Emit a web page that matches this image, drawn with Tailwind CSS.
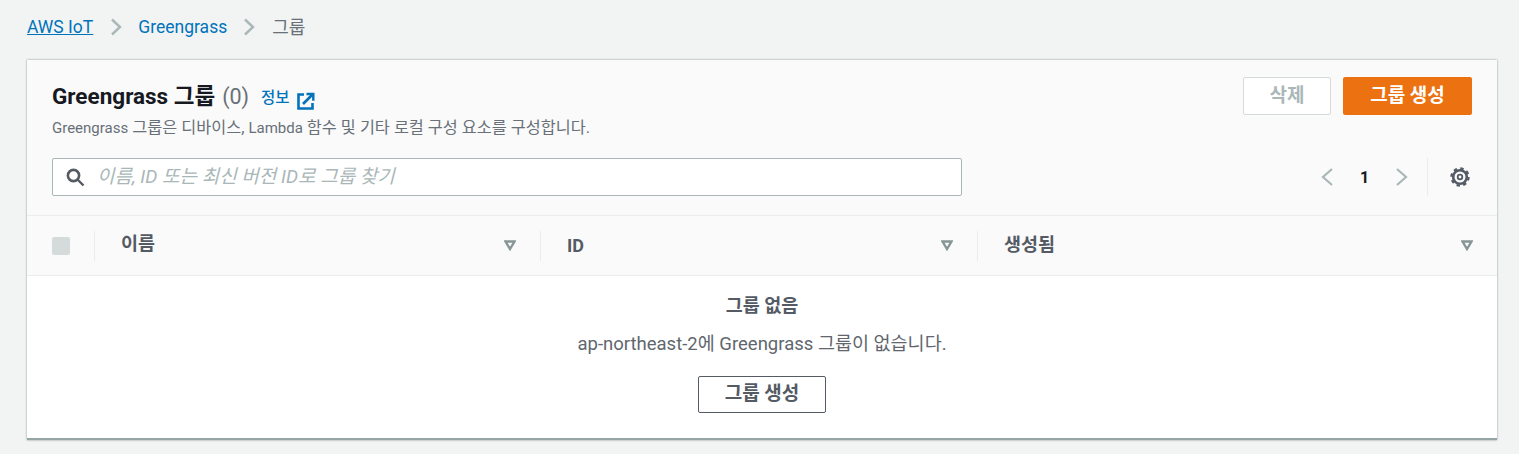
<!DOCTYPE html>
<html lang="ko">
<head>
  <meta charset="UTF-8">
  <title>Greengrass 그룹</title>
  <script src="https://cdn.jsdelivr.net/npm/@tailwindcss/browser@4"></script>
</head>
<body class="bg-[#f2f3f3] h-[454px] overflow-hidden font-['Roboto','Noto_Sans_CJK_KR',sans-serif] text-[14px] text-[#545b64]">

  <!-- Breadcrumb -->
  <nav class="h-[60px] pl-[27px] pb-[6px] flex items-center text-[17.5px]">
    <a href="#" class="text-[#0073bb] underline">AWS IoT</a>
    <svg class="w-[12px] h-[18px] ml-[17px] mr-[16px]" viewBox="0 0 12 18" fill="none" stroke="#aab7b8" stroke-width="2.4"><path d="M2 1.5 10 9l-8 7.5"/></svg>
    <a href="#" class="text-[#0073bb]">Greengrass</a>
    <svg class="w-[12px] h-[18px] ml-[16px] mr-[17px]" viewBox="0 0 12 18" fill="none" stroke="#aab7b8" stroke-width="2.4"><path d="M2 1.5 10 9l-8 7.5"/></svg>
    <span class="text-[#687078] text-[18px]">그룹</span>
  </nav>

  <!-- Card -->
  <section class="ml-[27px] w-[1470px] h-[380px] bg-white border-b-2 border-[#95a5a6] shadow-[0_0_2px_rgba(0,28,36,0.45)]">
    <div class="h-[156px] bg-[#fafafa] border-b border-[#eaeded] pl-[25px] pr-[25px] pt-[17px]">
      <div class="flex justify-between">
        <div>
          <div class="flex items-center h-[40px]">
            <h1 class="text-[22.5px] font-bold text-[#16191f]">Greengrass 그룹</h1>
            <span class="text-[21.5px] text-[#687078] ml-[7px]">(0)</span>
            <a href="#" class="text-[15.5px] text-[#0073bb] ml-[12px] mt-[4px] font-medium">정보</a>
            <svg class="w-[18px] h-[18px] ml-[7px] mt-[7px]" viewBox="0 0 18 18" fill="none" stroke="#0073bb" stroke-width="2.6"><path d="M7 2.5H1.5v14h14V11"/><path d="M6 12 15 3"/><path d="M9.5 2h6.8v6.8" stroke-width="2.4"/></svg>
          </div>
          <p class="text-[16.3px] text-[#687078] leading-[18px] mt-[2px]"><span class="text-[15px]">Greengrass</span> 그룹은 디바이스, <span class="text-[15px]">Lambda</span> 함수 및 기타 로컬 구성 요소를 구성합니다.</p>
        </div>
        <div class="flex gap-[12px] h-[38px]">
          <button class="w-[88px] h-[38px] bg-white border border-[#d5dbdb] rounded-[2px] text-[#aab7b8] text-[19px] font-bold">삭제</button>
          <button class="w-[129px] h-[38px] bg-[#ec7211] rounded-[2px] text-white text-[19px] font-bold">그룹 생성</button>
        </div>
      </div>
      <div class="flex justify-between mt-[21px]">
        <div class="w-[910px] h-[38px] bg-white border border-[#aab7b8] rounded-[2px] flex items-center pl-[13px]">
          <svg class="w-[19px] h-[19px]" viewBox="0 0 19 19" fill="none" stroke="#545b64"><circle cx="7.5" cy="7.5" r="5.6" stroke-width="2.6"/><path d="m11.5 11.5 6 6" stroke-width="2.4"/></svg>
          <span class="ml-[12px] text-[19px] italic text-[#aab7b8]">이름, ID 또는 최신 버전 ID로 그룹 찾기</span>
        </div>
        <div class="flex items-center h-[38px]">
          <svg class="w-[14px] h-[20px]" viewBox="0 0 14 20" fill="none" stroke="#aab7b8" stroke-width="2.2"><path d="M12 2 3 10l9 8"/></svg>
          <span class="w-[61px] pt-[1px] text-center text-[#16191f] text-[16px] font-bold">1</span>
          <svg class="w-[14px] h-[20px]" viewBox="0 0 14 20" fill="none" stroke="#aab7b8" stroke-width="2.2"><path d="m2 2 9 8-9 8"/></svg>
          <div class="w-px h-[38px] bg-[#eaeded] ml-[18px]"></div>
          <svg class="w-[20px] h-[20px] ml-[22px] mr-[2px]" viewBox="0 0 20 20" fill="none" stroke="#545b64"><circle cx="10" cy="10" r="6.8" stroke-width="2.6"/><circle cx="10" cy="10" r="8.6" stroke-width="2.2" stroke-dasharray="3.4 3.35"/><circle cx="10" cy="10" r="2.3" stroke-width="1.8"/></svg>
        </div>
      </div>
    </div>

    <!-- Table header -->
    <div class="h-[60px] bg-[#fafafa] border-b border-[#eaeded] flex items-center font-bold text-[18.5px]">
      <div class="w-[68px] flex items-center pl-[25px] shrink-0">
        <div class="w-[18px] h-[18px] bg-[#d5dbdb] rounded-[2px]"></div>
        <div class="w-px h-[30px] bg-[#eaeded] ml-[24px]"></div>
      </div>
      <div class="w-[446px] flex items-center justify-between pl-[26px] h-[30px]">
        <span class="mt-[-2px]">이름</span>
        <div class="flex items-center">
          <svg class="w-[12px] h-[11px]" viewBox="0 0 12 11" fill="none" stroke="#879596" stroke-width="2.4"><path d="M1.5 1.5h9L6 9z"/></svg>
          <div class="w-px h-[30px] bg-[#eaeded] ml-[24px]"></div>
        </div>
      </div>
      <div class="w-[437px] flex items-center justify-between pl-[26px] h-[30px]">
        <span class="text-[18px] mt-[-1px]">ID</span>
        <div class="flex items-center">
          <svg class="w-[12px] h-[11px]" viewBox="0 0 12 11" fill="none" stroke="#879596" stroke-width="2.4"><path d="M1.5 1.5h9L6 9z"/></svg>
          <div class="w-px h-[30px] bg-[#eaeded] ml-[24px]"></div>
        </div>
      </div>
      <div class="flex-1 flex items-center justify-between pl-[26px] pr-[24px] h-[30px]">
        <span>생성됨</span>
        <svg class="w-[12px] h-[11px]" viewBox="0 0 12 11" fill="none" stroke="#879596" stroke-width="2.4"><path d="M1.5 1.5h9L6 9z"/></svg>
      </div>
    </div>

    <!-- Empty state -->
    <div class="flex flex-col items-center pt-[19px]">
      <h2 class="text-[18.5px] font-bold leading-[22px]">그룹 없음</h2>
      <p class="text-[18.5px] leading-[22px] mt-[16px] text-[#5f666e]">ap-northeast-2에 Greengrass 그룹이 없습니다.</p>
      <button class="w-[128px] h-[37px] mt-[21px] bg-white border border-[#545b64] rounded-[2px] text-[19px] font-bold">그룹 생성</button>
    </div>
  </section>
</body>
</html>
